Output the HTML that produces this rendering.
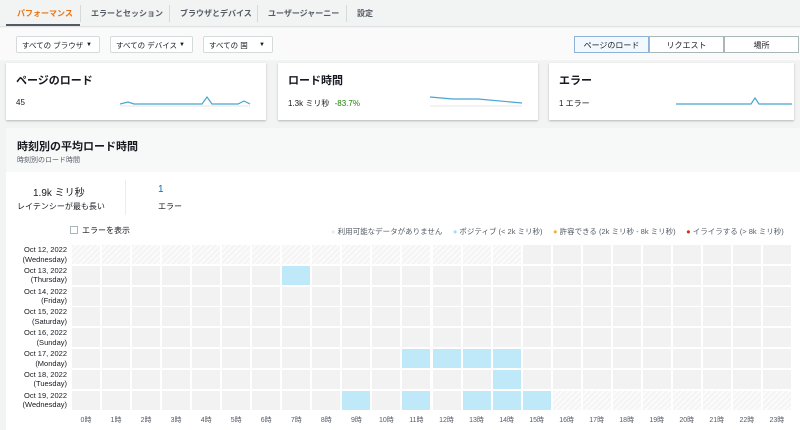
<!DOCTYPE html>
<html><head><meta charset="utf-8"><style>
*{margin:0;padding:0;box-sizing:border-box}
body{width:800px;height:430px;overflow:hidden;background:#f2f3f3;font-family:"Liberation Sans","Noto Sans CJK JP",sans-serif;color:#16191f;position:relative}
.a{position:absolute}
.tab{position:absolute;top:8px;font-size:8px;font-weight:bold;color:#545b64}
.sep{position:absolute;top:5px;width:1px;height:17px;background:#d5dbdb}
.sel{position:absolute;top:36px;height:17px;border:1px solid #d5dbdb;background:#fff;font-size:7.5px;color:#16191f;padding:3px 5px;border-radius:2px;white-space:nowrap}
.sel i{position:absolute;right:7px;top:4px;font-style:normal;font-size:6px;line-height:8px}
.seg{position:absolute;top:36px;height:17px;border:1px solid #aab7b8;background:#fff;font-size:8px;color:#16191f;text-align:center;padding-top:3px}
.card{position:absolute;top:63px;height:57px;background:#fff;box-shadow:0 1px 2px rgba(0,0,0,.25)}
.card h3{position:absolute;left:10px;top:9px;font-size:11px;font-weight:bold}
.card .v{position:absolute;left:10px;top:35px;font-size:8px}
.c{position:absolute;height:19px;width:28px;background:#f2f2f2}
.b{background:#bfe8f9}
.h{background:repeating-linear-gradient(135deg,#f4f4f4 0 2px,#fbfbfb 2px 4px)}
.rl{position:absolute;left:0;width:67px;text-align:right;font-size:7.5px;line-height:9.5px;color:#16191f}
.hl{position:absolute;top:415px;font-size:7px;color:#545b64;width:30px;text-align:center}
</style></head><body>
<div class="a" style="left:0;top:0;width:800px;height:27px;background:#f2f3f3;border-bottom:1px solid #e1e4e4"></div>
<div class="tab" style="left:17px;color:#ec7211">パフォーマンス</div>
<div class="a" style="left:6px;top:24px;width:74px;height:2px;background:#545b64"></div>
<div class="sep" style="left:80px"></div>
<div class="tab" style="left:91px">エラーとセッション</div>
<div class="sep" style="left:169px"></div>
<div class="tab" style="left:180px">ブラウザとデバイス</div>
<div class="sep" style="left:257px"></div>
<div class="tab" style="left:268px">ユーザージャーニー</div>
<div class="sep" style="left:346px"></div>
<div class="tab" style="left:357px">設定</div>
<div class="a" style="left:0;top:28px;width:800px;height:32px;background:#fafafa"></div>
<div class="sel" style="left:16px;width:84px">すべての ブラウザ<i>▼</i></div>
<div class="sel" style="left:110px;width:83px">すべての デバイス<i>▼</i></div>
<div class="sel" style="left:203px;width:70px">すべての 国<i>▼</i></div>
<div class="seg" style="left:574px;width:75px;background:#f1f8fe;border-color:#8fb3d6">ページのロード</div>
<div class="seg" style="left:649px;width:75px">リクエスト</div>
<div class="seg" style="left:724px;width:75px">場所</div>
<div class="card" style="left:6px;width:260px"><h3>ページのロード</h3><div class="v">45</div>
<svg class="a" style="left:114px;top:28px" width="136" height="16"><polyline fill="none" stroke="#4aa5d0" stroke-width="1.2" points="0,13 8,11 14,13 82,13 87,6 92,13 118,13 124,10 130,13"/><line x1="0" y1="15" x2="130" y2="15" stroke="#e5e5e5"/></svg></div>
<div class="card" style="left:278px;width:260px"><h3>ロード時間</h3><div class="v">1.3k ミリ秒 <span style="color:#1d8102;margin-left:3px">-83.7%</span></div>
<svg class="a" style="left:150px;top:28px" width="96" height="16"><polyline fill="none" stroke="#4aa5d0" stroke-width="1.2" points="2,6 25,8 50,8 94,12"/><line x1="2" y1="15" x2="94" y2="15" stroke="#e5e5e5"/></svg></div>
<div class="card" style="left:549px;width:245px"><h3>エラー</h3><div class="v">1 エラー</div>
<svg class="a" style="left:127px;top:28px" width="118" height="16"><polyline fill="none" stroke="#4aa5d0" stroke-width="1.2" points="0,13 75,13 79,7 83,13 116,13"/></svg></div>
<div class="a" style="left:6px;top:128px;width:794px;height:302px;background:#fff"></div>
<div class="a" style="left:6px;top:128px;width:794px;height:44px;background:#f7f8f8"></div>
<div class="a" style="left:17px;top:138px;font-size:11px;font-weight:bold">時刻別の平均ロード時間</div>
<div class="a" style="left:17px;top:155px;font-size:7px;color:#545b64">時刻別のロード時間</div>
<div class="a" style="left:33px;top:184px;font-size:10px">1.9k ミリ秒</div>
<div class="a" style="left:17px;top:201px;font-size:8px">レイテンシーが最も長い</div>
<div class="a" style="left:125px;top:180px;width:1px;height:35px;background:#eaeded"></div>
<div class="a" style="left:158px;top:184px;font-size:10px;color:#0073bb">1</div>
<div class="a" style="left:158px;top:201px;font-size:8px">エラー</div>
<div class="a" style="left:70px;top:226px;width:8px;height:8px;border:1px solid #aab7b8;background:#fff"></div>
<div class="a" style="left:82px;top:225px;font-size:8px">エラーを表示</div>
<div class="a" style="left:331px;top:226px;font-size:7.5px;color:#545b64;white-space:nowrap"><span style="color:#e9ebed">●</span> 利用可能なデータがありません &nbsp;&nbsp;&nbsp; <span style="color:#a6dcf5">●</span> ポジティブ (&lt; 2k ミリ秒) &nbsp;&nbsp;&nbsp; <span style="color:#f2b13c">●</span> 許容できる (2k ミリ秒 - 8k ミリ秒) &nbsp;&nbsp;&nbsp; <span style="color:#d13212">●</span> イライラする (&gt; 8k ミリ秒)</div>
<div id="g"></div>
<script>
var rows=[["Oct 12, 2022","(Wednesday)"],["Oct 13, 2022","(Thursday)"],["Oct 14, 2022","(Friday)"],["Oct 15, 2022","(Saturday)"],["Oct 16, 2022","(Sunday)"],["Oct 17, 2022","(Monday)"],["Oct 18, 2022","(Tuesday)"],["Oct 19, 2022","(Wednesday)"]];
var blue={"1-7":1,"5-11":1,"5-12":1,"5-13":1,"5-14":1,"6-14":1,"7-9":1,"7-11":1,"7-13":1,"7-14":1,"7-15":1};
var h="";
for(var r=0;r<8;r++){var y=245+r*20.8;
h+='<div class="rl" style="top:'+(y)+'px">'+rows[r][0]+'<br>'+rows[r][1]+'</div>';
for(var c=0;c<24;c++){var x=72+c*30.04;var cls="c";
if(blue[r+"-"+c])cls+=" b";else if((r==0&&c<15)||(r==7&&c>=16))cls+=" h";
h+='<div class="'+cls+'" style="left:'+x.toFixed(1)+'px;top:'+y.toFixed(1)+'px"></div>';}}
for(var c=0;c<24;c++)h+='<div class="hl" style="left:'+(72+c*30.04-1).toFixed(1)+'px">'+c+'時</div>';
document.getElementById("g").innerHTML=h;
</script>
</body></html>
